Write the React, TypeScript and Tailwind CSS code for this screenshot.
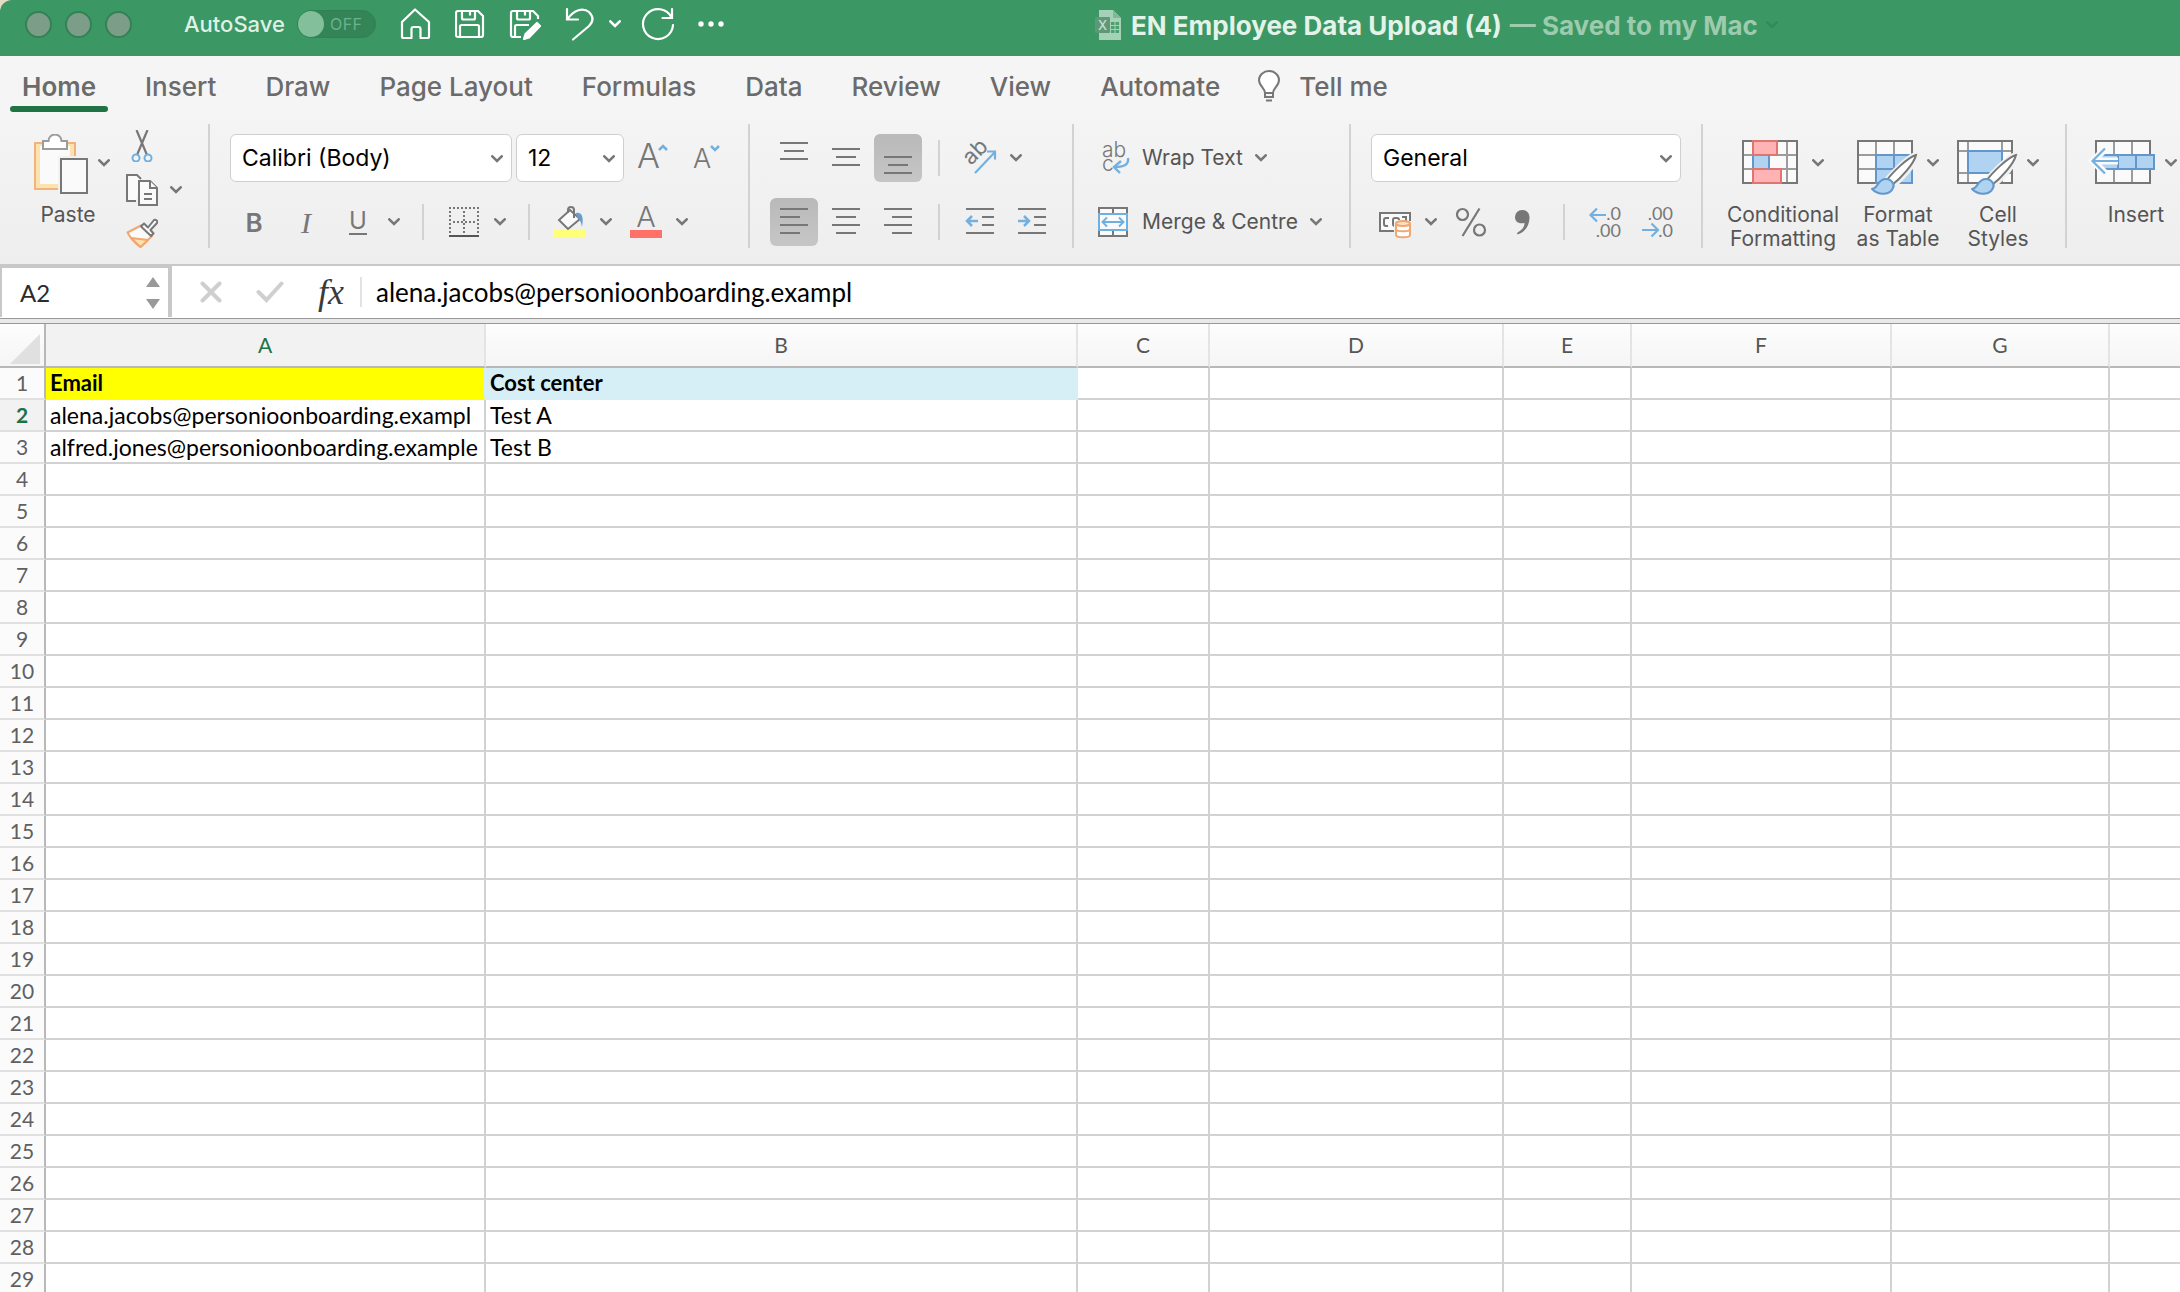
import { useState, type ReactNode } from "react";

const TABS = ["Home", "Insert", "Draw", "Page Layout", "Formulas", "Data", "Review", "View", "Automate"];

const COLUMNS = [
  { name: "A", width: "w-[440px]" },
  { name: "B", width: "w-[592px]" },
  { name: "C", width: "w-[132px]" },
  { name: "D", width: "w-[294px]" },
  { name: "E", width: "w-[128px]" },
  { name: "F", width: "w-[260px]" },
  { name: "G", width: "w-[218px]" },
  { name: "", width: "" },
];

const ROW_COUNT = 29;

const CELLS: Record<string, string> = {
  A1: "Email",
  B1: "Cost center",
  A2: "alena.jacobs@personioonboarding.exampl",
  B2: "Test A",
  A3: "alfred.jones@personioonboarding.example",
  B3: "Test B",
};

const CELL_STYLES: Record<string, string> = {
  A1: "bg-[#ffff00] border-b-[#ffff00] border-r-[#d6eff7] text-[22px] font-bold",
  B1: "bg-[#d6eff7] border-[#d6eff7] text-[22px] font-bold",
};

function Chevron({ className = "text-[#777777]" }: { className?: string }) {
  return (
    <svg width="12" height="8" viewBox="0 0 12 8" fill="none" className={className}>
      <path d="M1.3 1.3 6 6l4.7-4.7" stroke="currentColor" strokeWidth="2.6" strokeLinecap="round" />
    </svg>
  );
}

function ToolButton({ label, active = false, children }: { label: string; active?: boolean; children: ReactNode }) {
  return (
    <button
      aria-label={label}
      aria-pressed={active}
      className={`flex h-12 w-12 shrink-0 items-center justify-center rounded-md text-[#777777] ${
        active ? "bg-linear-to-b from-[#b9b9b9] to-[#c6c6c6]" : ""
      }`}
    >
      {children}
    </button>
  );
}

function MenuButton({ label }: { label: string }) {
  return (
    <button aria-label={label} className="flex h-12 w-6 shrink-0 items-center justify-center">
      <Chevron />
    </button>
  );
}

function Divider() {
  return <div className="mx-4 h-9 w-[2px] shrink-0 bg-[#d2d2d2]" />;
}

function GroupDivider() {
  return <div className="mt-1 h-[124px] w-[2px] shrink-0 bg-[#d2d2d2]" />;
}

function Dropdown({ label, options, width }: { label: string; options: string[]; width: string }) {
  return (
    <div className={`relative h-12 shrink-0 ${width}`}>
      <select
        aria-label={label}
        className="h-12 w-full appearance-none rounded-md border border-[#cfcfcf] bg-white pl-[11px] text-[23px] text-black"
      >
        {options.map((o) => (
          <option key={o}>{o}</option>
        ))}
      </select>
      <span className="pointer-events-none absolute top-[21px] right-[9px]">
        <Chevron />
      </span>
    </div>
  );
}

// horizontal strokes of the alignment icons: [x, y, width]
function Lines({ rows }: { rows: [number, number, number][] }) {
  return (
    <svg width="32" height="32" viewBox="0 0 32 32" fill="#777777">
      {rows.map(([x, y, w]) => (
        <rect key={y} x={x} y={y} width={w} height="2" />
      ))}
    </svg>
  );
}

function BigButton({ label, width = "w-[82px]", icon }: { label: ReactNode; width?: string; icon: ReactNode }) {
  return (
    <button className={`flex shrink-0 flex-col items-center text-[21px] leading-6 text-[#555555] ${width}`}>
      <span className="flex h-[69px] w-[82px] items-start gap-[14px] pt-[6px]">
        {icon}
        <span className="pt-[19px]">
          <Chevron />
        </span>
      </span>
      <span className="text-center whitespace-nowrap">{label}</span>
    </button>
  );
}

function Brush() {
  return (
    <g>
      <path d="M57 15C51 17 34 34 29 41l6 6C44 40 58 24 60 17z" fill="#f1f1f1" stroke="#f1f1f1" strokeWidth="5" />
      <path d="M59 15C51 17 35 33 30 40l5 5C43 39 57 24 59 15z" fill="#fff" stroke="#777" strokeWidth="2" />
      <path
        d="M15 49c7-1 5-10 14-10 6 0 9 6 7 9-3 7-14 8-21 1z"
        fill="#afd3f1"
        stroke="#6397cc"
        strokeWidth="2"
        strokeLinejoin="round"
      />
    </g>
  );
}

function TitleBar() {
  const [autoSave, setAutoSave] = useState(false);
  return (
    <header className="flex h-14 shrink-0 items-start rounded-tl-xl bg-[#3b9763] pl-[25px] text-white">
      <div className="flex h-12 items-center gap-[13px]">
        {["Close", "Minimise", "Zoom"].map((n) => (
          <button key={n} aria-label={n} className="h-[27px] w-[27px] rounded-full border-2 border-[#338255] bg-[#7c9e88]" />
        ))}
      </div>
      <label htmlFor="autosave" className="ml-[52px] flex h-12 w-[113px] items-center text-[22px] font-medium text-[#dff1e6]">
        AutoSave
      </label>
      <button
        id="autosave"
        role="switch"
        aria-checked={autoSave}
        onClick={() => setAutoSave(!autoSave)}
        className="mt-[10px] flex h-7 w-[79px] shrink-0 items-center gap-[6px] rounded-full border border-[#318155] bg-[#338457] text-base tracking-wide text-[#6fb18b]"
      >
        <span className="h-[26px] w-[26px] rounded-full bg-[#83bf9b]" />
        OFF
      </button>
      <div className="ml-6 flex h-12 items-center">
        <button aria-label="Home" className="w-[55px]">
          <svg width="32" height="32" viewBox="0 0 32 32" fill="none" stroke="#fff" strokeWidth="2.2" strokeLinejoin="round">
            <path d="M2 14 15 1.500 29 14v14.500a1.500 1.500 0 0 1-1.500 1.500H20.500V21a2 2 0 0 0-2-2h-5a2 2 0 0 0-2 2v9H3.500A1.500 1.500 0 0 1 2 28.500z" />
          </svg>
        </button>
        <button aria-label="Save" className="w-[54px]">
          <svg width="32" height="32" viewBox="0 0 32 32" fill="none" stroke="#fff" strokeWidth="2.2" strokeLinejoin="round">
            <path d="M3 3h20l5 5v19a2 2 0 0 1-2 2H3a2 2 0 0 1-2-2V5a2 2 0 0 1 2-2z" />
            <path d="M7 3v7a1.500 1.500 0 0 0 1.500 1.500h10A1.500 1.500 0 0 0 20 10V3M5 29V18.500A1.500 1.500 0 0 1 6.500 17h16a1.500 1.500 0 0 1 1.500 1.500V29M15 3.500v4" />
          </svg>
        </button>
        <button aria-label="Save as" className="w-[54px]">
          <svg width="32" height="32" viewBox="0 0 32 32" fill="none" stroke="#fff" strokeWidth="2.2" strokeLinejoin="round">
            <path d="M12 29H4a2 2 0 0 1-2-2V5a2 2 0 0 1 2-2h20l5 5v3" />
            <path d="M8 3v7a1.500 1.500 0 0 0 1.500 1.500h10A1.500 1.500 0 0 0 21 10V3M6 29V18.500A1.500 1.500 0 0 1 7.500 17H20M16 3.500v4" />
            <path d="M28 15l3 3L20 29.500l-5 1.500 1.500-5z" fill="#fff" />
          </svg>
        </button>
        <button aria-label="Undo" className="w-[46px]">
          <svg width="32" height="34" viewBox="0 0 32 34" fill="none" stroke="#fff" strokeWidth="2.2" strokeLinecap="round">
            <path d="M4 2v10.500h11M4.500 12C11 3 20 0 26 5c5 5 4 10 0 14L10 32.500" />
          </svg>
        </button>
        <button aria-label="Undo history" className="w-8">
          <Chevron className="text-white" />
        </button>
        <button aria-label="Redo" className="w-[56px]">
          <svg width="34" height="34" viewBox="0 0 34 34" fill="none" stroke="#fff" strokeWidth="2.2" strokeLinecap="round">
            <path d="M31 2v9h-9.500M30.500 10.500A15 15 0 1 0 32 18" />
          </svg>
        </button>
        <button aria-label="More" className="w-[28px]">
          <svg width="28" height="8" viewBox="0 0 28 8" fill="#fff">
            <circle cx="4" cy="4" r="2.7" />
            <circle cx="14" cy="4" r="2.7" />
            <circle cx="24" cy="4" r="2.7" />
          </svg>
        </button>
      </div>
      <div className="ml-[370px] flex h-[50px] items-center text-[26px] font-bold whitespace-nowrap">
        <svg width="28" height="30" viewBox="0 0 28 30" className="mr-[8px]">
          <path d="M4 0h14l8 8v22H4z" fill="#a5d1b6" />
          <path d="M18 0l8 8h-8z" fill="#7fb997" />
          <path d="M16 12h8v3h-8zM16 16h8v3h-8zM16 20h8v3h-8z" fill="#4f9f71" />
          <path d="M20 11v13" stroke="#a5d1b6" strokeWidth="1" />
          <rect y="7" width="15" height="16" rx="1" fill="#5f9876" />
          <text x="7.5" y="20" textAnchor="middle" fontSize="13" fontWeight="500" fill="#c3dfce">
            X
          </text>
        </svg>
        <h1 className="text-[#e3f3e9]">EN Employee Data Upload (4)</h1>
        <span className="ml-2 text-[#9ccbae]">— Saved to my Mac</span>
        <button aria-label="File menu" className="ml-[8px]">
          <Chevron className="text-[#338a5a]" />
        </button>
      </div>
    </header>
  );
}

function Tabs() {
  const [tab, setTab] = useState("Home");
  return (
    <nav className="flex h-16 shrink-0 items-start gap-[25px] bg-[#f5f5f5] pl-[10px] text-[26px] font-medium text-[#6b6b6b]">
      {TABS.map((t) => (
        <button key={t} onClick={() => setTab(t)} className={`flex h-14 flex-col ${t === tab ? "font-semibold" : ""}`}>
          <span className="flex h-[50px] items-center px-[12px] pt-[10px] whitespace-nowrap">{t}</span>
          {t === tab && <span className="h-[6px] w-full rounded-full bg-[#217346]" />}
        </button>
      ))}
      <button className="flex h-[50px] items-center gap-[18px] pt-[10px] whitespace-nowrap">
        <svg width="24" height="32" viewBox="0 0 24 32" fill="none" stroke="#777" strokeWidth="2">
          <path d="M8 23c0-5-6-7-6-13a10 9 0 0 1 20 0c0 6-6 8-6 13z" fill="#fff" />
          <path d="M8 23v4h8v-4M9 30.500h6" />
        </svg>
        Tell me
      </button>
    </nav>
  );
}

function ClipboardGroup() {
  return (
    <div className="flex w-[208px] shrink-0 pl-[34px]">
      <button className="flex w-[92px] flex-col text-[21px] leading-6 text-[#555555]">
        <span className="flex h-[73px]">
          <svg width="54" height="62" viewBox="0 0 54 62" fill="none" className="mt-1 mr-[10px]">
            <rect x="1" y="9" width="40" height="46" fill="#fbe3b0" stroke="#f2b27e" strokeWidth="2" />
            <rect x="6" y="12" width="30" height="38" fill="#fafafa" />
            <path d="M9 15V7h5.500a6.500 6.500 0 0 1 13 0H33v8z" fill="#fff" stroke="#9c9c9c" strokeWidth="2" />
            <rect x="24" y="22" width="30" height="40" fill="#f2f2f2" />
            <rect x="27" y="25" width="26" height="34" fill="#fafafa" stroke="#777" strokeWidth="2" />
          </svg>
          <span className="pt-[29px]">
            <Chevron />
          </span>
        </span>
        <span className="w-[68px] text-center">Paste</span>
      </button>
      <div className="flex flex-col gap-3">
        <button aria-label="Cut" className="h-8 w-8">
          <svg width="32" height="32" viewBox="0 0 32 32" fill="none">
            <path d="M10.500 0 21 25M21.500 0 11 25" stroke="#777" strokeWidth="2.2" />
            <circle cx="10" cy="28" r="3.5" stroke="#6fb0e0" strokeWidth="2" />
            <circle cx="22" cy="28" r="3.5" stroke="#6fb0e0" strokeWidth="2" />
          </svg>
        </button>
        <button aria-label="Copy" className="flex h-8 items-center gap-3">
          <svg width="32" height="32" viewBox="0 0 32 32" fill="#fafafa" stroke="#777" strokeWidth="2">
            <path d="M10 27H1V1h10l4 4" />
            <path d="M13 7h11l7 7v17H13z" />
            <path d="M24 7v7h7M18 20h8M18 25h8" />
          </svg>
          <Chevron />
        </button>
        <button aria-label="Format painter" className="h-8 w-8">
          <svg width="32" height="32" viewBox="0 0 32 32" fill="#fafafa" strokeWidth="2" strokeLinejoin="round">
            <path d="M16 7 1.500 14.500C5 21 10 26 14.500 29L26 18z" stroke="#f2a670" />
            <path d="M5 20 22 22l-7.500 7z" fill="#fbe3b0" stroke="#f2a670" />
            <path d="M15 8.500l3-3 4 4L28 2c2-1 4 1 3 3l-6.500 7 3 3.500-2.500 2.500z" stroke="#777" />
          </svg>
        </button>
      </div>
    </div>
  );
}

function FontGroup() {
  return (
    <div className="flex shrink-0 flex-col gap-4 px-5 pt-[14px]">
      <div className="flex gap-1">
        <Dropdown label="Font" options={["Calibri (Body)", "Arial", "Helvetica", "Times New Roman"]} width="w-[282px]" />
        <Dropdown label="Font size" options={["12", "10", "11", "14", "16", "18"]} width="w-[108px]" />
        <ToolButton label="Increase font size">
          <svg width="32" height="32" viewBox="0 0 32 32" fill="none" className="overflow-visible">
            <text x="1" y="26" fontSize="34" fontWeight="300" fill="#777">A</text>
            <path d="m23 8 4-4 4 4" stroke="#74b0df" strokeWidth="2.5" />
          </svg>
        </ToolButton>
        <ToolButton label="Decrease font size">
          <svg width="32" height="32" viewBox="0 0 32 32" fill="none" className="overflow-visible">
            <text x="5" y="26" fontSize="27" fontWeight="300" fill="#777">A</text>
            <path d="m23 4 4 4 4-4" stroke="#74b0df" strokeWidth="2.5" />
          </svg>
        </ToolButton>
      </div>
      <div className="flex items-center">
        <div className="flex gap-1">
          <ToolButton label="Bold">
            <span className="text-[26px] font-semibold">B</span>
          </ToolButton>
          <ToolButton label="Italic">
            <span className="font-['Liberation_Serif'] text-[30px] italic">I</span>
          </ToolButton>
          <ToolButton label="Underline">
            <span className="border-b-2 border-[#777777] text-[24px] leading-6">U</span>
          </ToolButton>
        </div>
        <MenuButton label="Underline styles" />
        <Divider />
        <ToolButton label="Borders">
          <svg width="30" height="30" viewBox="0 0 30 30" fill="#fafafa" stroke="#777" strokeWidth="2">
            <path d="M0 1h30M1 4v24M29 4v24M15 4v24M4 15h24" strokeDasharray="2 2" />
            <path d="M0 29h30" stroke="#555" />
          </svg>
        </ToolButton>
        <MenuButton label="Border styles" />
        <Divider />
        <ToolButton label="Fill colour">
          <svg width="32" height="32" viewBox="0 0 32 32" fill="none">
            <path d="M5 14 16 4l10 9-12 10z" fill="#fafafa" stroke="#777" strokeWidth="2" />
            <path d="M14 7V4a3 3 0 0 1 6 0v8" stroke="#777" strokeWidth="2" />
            <path d="M22 7c6-1 8 4 6 14-1-5-2-8-5-10z" fill="#6a9bd0" />
            <rect y="24" width="32" height="8" fill="#ffff7a" />
          </svg>
        </ToolButton>
        <MenuButton label="More fill colours" />
        <div className="w-1" />
        <ToolButton label="Font colour">
          <svg width="32" height="32" viewBox="0 0 32 32" className="overflow-visible">
            <text x="16" y="21" textAnchor="middle" fontSize="29" fontWeight="300" fill="#777">A</text>
            <rect y="24" width="32" height="8" fill="#ff7168" />
          </svg>
        </ToolButton>
        <MenuButton label="More font colours" />
      </div>
    </div>
  );
}

function AlignmentGroup() {
  return (
    <div className="flex shrink-0 flex-col gap-4 pt-[14px] pr-4 pl-5">
      <div className="flex items-center">
        <div className="flex gap-1">
          <ToolButton label="Top align">
            <Lines rows={[[2, 0, 28], [6, 8, 20], [2, 16, 28]]} />
          </ToolButton>
          <ToolButton label="Middle align">
            <Lines rows={[[2, 6, 28], [6, 14, 20], [2, 22, 28]]} />
          </ToolButton>
          <ToolButton label="Bottom align" active>
            <Lines rows={[[2, 14, 28], [6, 22, 20], [2, 30, 28]]} />
          </ToolButton>
        </div>
        <Divider />
        <ToolButton label="Orientation">
          <svg width="32" height="32" viewBox="0 0 32 32" fill="none" className="overflow-visible">
            <text x="7" y="24" fontSize="22" fill="#777" transform="rotate(-45 7 24)">ab</text>
            <path d="M11 31 31 10M23 9.500h8v8" stroke="#74b0df" strokeWidth="2.2" />
          </svg>
        </ToolButton>
        <MenuButton label="Orientation options" />
      </div>
      <div className="flex items-center">
        <div className="flex gap-1">
          <ToolButton label="Align left" active>
            <Lines rows={[[2, 2, 28], [2, 10, 20], [2, 18, 28], [2, 26, 20]]} />
          </ToolButton>
          <ToolButton label="Centre">
            <Lines rows={[[2, 2, 28], [6, 10, 20], [2, 18, 28], [6, 26, 20]]} />
          </ToolButton>
          <ToolButton label="Align right">
            <Lines rows={[[2, 2, 28], [10, 10, 20], [2, 18, 28], [10, 26, 20]]} />
          </ToolButton>
        </div>
        <Divider />
        <div className="flex gap-1">
          <ToolButton label="Decrease indent">
            <svg width="32" height="32" viewBox="0 0 32 32" fill="none" stroke="#777" strokeWidth="2">
              <path d="M2 3h28M18 11h12M18 19h12M2 27h28" />
              <path d="M14 15H4M8 10l-5 5 5 5" stroke="#74b0df" strokeWidth="2.5" />
            </svg>
          </ToolButton>
          <ToolButton label="Increase indent">
            <svg width="32" height="32" viewBox="0 0 32 32" fill="none" stroke="#777" strokeWidth="2">
              <path d="M2 3h28M18 11h12M18 19h12M2 27h28" />
              <path d="M2 15h10M8 10l5 5-5 5" stroke="#74b0df" strokeWidth="2.5" />
            </svg>
          </ToolButton>
        </div>
      </div>
    </div>
  );
}

function WrapGroup() {
  return (
    <div className="flex w-[275px] shrink-0 flex-col gap-4 pt-[14px] pl-6 text-[21px] text-[#555555]">
      <button className="flex h-12 items-center whitespace-nowrap">
        <svg width="32" height="32" viewBox="0 0 32 32" fill="none" className="mr-3 overflow-visible">
          <text x="4" y="15" fontSize="21" fontWeight="300" fill="#777">ab</text>
          <text x="4" y="29" fontSize="21" fontWeight="300" fill="#777">c</text>
          <path d="M30 16c1 6-3 9-13 9M23 19l-7 6 6 6" stroke="#74b0df" strokeWidth="2.4" />
        </svg>
        <span className="mr-3">Wrap Text</span>
        <Chevron />
      </button>
      <button className="flex h-12 items-center whitespace-nowrap">
        <svg width="32" height="32" viewBox="0 0 32 32" fill="#fafafa" strokeWidth="2" className="mr-3">
          <path d="M1 2h28v28H1zM15 2v28" stroke="#777" />
          <path d="M1 8h28v16H1z" stroke="#6fb0e0" />
          <path d="M5 16h20M9 11.500 4.500 16 9 20.500M21 11.500l4.500 4.500-4.500 4.500" fill="none" stroke="#6fb0e0" />
        </svg>
        <span className="mr-3">Merge &amp; Centre</span>
        <Chevron />
      </button>
    </div>
  );
}

function NumberGroup() {
  return (
    <div className="flex shrink-0 flex-col gap-4 px-5 pt-[14px]">
      <Dropdown label="Number format" options={["General", "Number", "Currency", "Date", "Text"]} width="w-[310px]" />
      <div className="flex items-center">
        <ToolButton label="Accounting format">
          <svg width="32" height="32" viewBox="0 0 32 32" fill="none" className="overflow-visible">
            <rect x="1" y="7" width="30" height="18" fill="#fafafa" stroke="#777" strokeWidth="2" />
            <path d="M10 12H7q-2 0-2 2v4q0 2 2 2h2M20 20h-4q-2 0-2-2v-4q0-2 2-2h2q2 0 2 2M23 11h4v5" stroke="#777" strokeWidth="2" />
            <path d="M15 15h17v17H15z" fill="#f1f1f1" />
            <path d="M17 17v12c0 3 14 3 14 0V17" fill="#fff" stroke="#f2a670" strokeWidth="2" />
            <path d="M17 23c0 3 14 3 14 0" stroke="#f2a670" strokeWidth="2" />
            <ellipse cx="24" cy="17.5" rx="7" ry="2.5" fill="#fde3c8" stroke="#f2a670" strokeWidth="2" />
          </svg>
        </ToolButton>
        <MenuButton label="Accounting options" />
        <div className="w-1" />
        <ToolButton label="Per cent style">
          <svg width="32" height="32" viewBox="0 0 32 32" fill="none" stroke="#777" strokeWidth="2.2">
            <circle cx="7.500" cy="8.500" r="5.5" />
            <circle cx="24.500" cy="24" r="5.5" />
            <path d="M24.500 2.500 7.500 30" />
          </svg>
        </ToolButton>
        <div className="w-1" />
        <ToolButton label="Comma style">
          <svg width="16" height="28" viewBox="0 0 16 28" fill="#777">
            <path d="M7 2a7 7 0 0 1 7.500 7.500C14.500 18 10 24 2.500 26.500L2 25c5-3 7.500-6 7.500-10C3 16.500 0 13 0 9a7 7 0 0 1 7-7z" />
          </svg>
        </ToolButton>
        <Divider />
        <div className="flex gap-1">
          <ToolButton label="Increase decimal">
            <svg width="34" height="32" viewBox="0 0 34 32" fill="none" className="overflow-visible">
              <text x="33" y="14" textAnchor="end" fontSize="18" fontFamily="Lato" fill="#777">.0</text>
              <text x="33" y="31" textAnchor="end" fontSize="18" fontFamily="Lato" fill="#777">.00</text>
              <path d="M18 9H3M9 2.500 2.500 9 9 15.500" stroke="#74b0df" strokeWidth="2.2" />
            </svg>
          </ToolButton>
          <ToolButton label="Decrease decimal">
            <svg width="34" height="32" viewBox="0 0 34 32" fill="none" className="overflow-visible">
              <text x="33" y="14" textAnchor="end" fontSize="18" fontFamily="Lato" fill="#777">.00</text>
              <text x="33" y="31" textAnchor="end" fontSize="18" fontFamily="Lato" fill="#777">.0</text>
              <path d="M2 24h15M11.500 17.500 18 24l-6.500 6.500" stroke="#74b0df" strokeWidth="2.2" />
            </svg>
          </ToolButton>
        </div>
      </div>
    </div>
  );
}

function StylesGroup() {
  return (
    <div className="flex shrink-0 items-start gap-[18px] pt-[14px] pr-[26px] pl-6">
      <BigButton
        width="w-[112px]"
        label={<>Conditional<br />Formatting</>}
        icon={
          <svg width="56" height="44" viewBox="0 0 56 44" fill="none" strokeWidth="2">
            <path d="M1 1h54v42H1z" fill="#fafafa" stroke="#777" />
            <path d="M11 2v40M45 2v40M2 15h52M2 29h52" stroke="#9c9c9c" />
            <path d="M12 16h32v12H12z" fill="#fafafa" />
            <path d="M11 1h24v14H11zM11 29h28v14H11z" fill="#ffb3b5" stroke="#e0756f" />
            <path d="M11 16h16v12H11z" fill="#afd3f1" />
            <path d="M27 15v14M11 16v12" stroke="#6397cc" />
          </svg>
        }
      />
      <BigButton
        label={<>Format<br />as Table</>}
        icon={
          <svg width="56" height="54" viewBox="0 0 56 54" fill="none" strokeWidth="2" className="overflow-visible">
            <path d="M1 1h54v42H1z" fill="#fafafa" stroke="#777" />
            <path d="M19 15h36v28H19z" fill="#afd3f1" />
            <path d="M19 2v13M37 2v13M2 15h17M2 29h17" stroke="#9c9c9c" />
            <path d="M19 15h36v28H19zM37 15v28M19 29h36" stroke="#6397cc" />
            <Brush />
          </svg>
        }
      />
      <BigButton
        label={<>Cell<br />Styles</>}
        icon={
          <svg width="56" height="54" viewBox="0 0 56 54" fill="none" strokeWidth="2" className="overflow-visible">
            <path d="M1 1h54v42H1z" fill="#fafafa" stroke="#777" />
            <path d="M11 2v40M45 2v40M2 11h52M2 33h52" stroke="#9c9c9c" />
            <path d="M11 11h34v22H11z" fill="#afd3f1" stroke="#6397cc" />
            <Brush />
          </svg>
        }
      />
    </div>
  );
}

function Ribbon() {
  return (
    <div className="flex h-36 shrink-0 overflow-hidden bg-linear-to-b from-[#f4f4f4] to-[#eeeeee]">
      <div className="flex items-start">
        <div className="pt-[10px]">
          <ClipboardGroup />
        </div>
        <GroupDivider />
        <FontGroup />
        <GroupDivider />
        <AlignmentGroup />
        <GroupDivider />
        <WrapGroup />
        <GroupDivider />
        <NumberGroup />
        <GroupDivider />
        <StylesGroup />
        <GroupDivider />
        <div className="shrink-0 pt-[14px] pl-7">
          <BigButton
            label="Insert"
            icon={
              <svg width="56" height="44" viewBox="0 0 56 44" fill="none" strokeWidth="2" className="overflow-visible">
                <path d="M1 1h54v42H1z" fill="#fafafa" stroke="#777" />
                <path d="M19 2v40M37 2v40" stroke="#9c9c9c" />
                <path d="M5 15h54v14H5z" fill="#afd3f1" stroke="#6397cc" />
                <path d="M23 15v14M41 15v14" stroke="#6397cc" />
                <path d="M23 21H-3M11 8l-13 13 13 13" stroke="#fafafa" strokeWidth="7" />
                <path d="M23 21H-3M10 8.500-2.500 21 10 33.500" stroke="#74b0df" strokeWidth="2.2" />
              </svg>
            }
          />
        </div>
      </div>
    </div>
  );
}

function FormulaBar() {
  return (
    <div className="flex h-[54px] shrink-0 border-t-2 border-[#c8c8c8] bg-white font-['Lato',sans-serif]">
      <div className="flex h-[51px] w-[172px] shrink-0 items-center border-t-2 border-r-4 border-l-2 border-[#c8c8c8]">
        <input aria-label="Name box" defaultValue="A2" className="w-[144px] pl-[18px] text-[24px] text-[#2b2b2b] outline-none" />
        <div className="flex flex-col gap-3">
          <button aria-label="Previous name">
            <svg width="14" height="10" viewBox="0 0 14 10" className="fill-[#999999]">
              <path d="M7 0l7 10H0z" />
            </svg>
          </button>
          <button aria-label="Next name">
            <svg width="14" height="10" viewBox="0 0 14 10" className="fill-[#999999]">
              <path d="M0 0h14L7 10z" />
            </svg>
          </button>
        </div>
      </div>
      <div className="flex h-[52px] grow items-center pl-7">
        <button aria-label="Cancel" className="w-14">
          <svg width="22" height="22" viewBox="0 0 22 22" stroke="#cfcfcf" strokeWidth="4" strokeLinecap="round">
            <path d="m2.500 2.500 17 17M19.500 2.500l-17 17" />
          </svg>
        </button>
        <button aria-label="Enter" className="w-[62px]">
          <svg width="28" height="22" viewBox="0 0 28 22" fill="none" stroke="#cfcfcf" strokeWidth="4" strokeLinecap="round">
            <path d="m2.500 11 8 8L25.500 2.500" />
          </svg>
        </button>
        <button aria-label="Insert function" className="w-[42px] text-left font-['Liberation_Serif',serif] text-[36px] leading-8 text-[#3a3a3a] italic">
          fx
        </button>
        <div className="h-[30px] w-[2px] bg-[#e2e2e2]" />
        <input
          aria-label="Formula"
          defaultValue={CELLS.A2}
          className="h-full grow pl-[14px] text-[26px] text-black outline-none"
        />
      </div>
    </div>
  );
}

function Sheet() {
  const rows = Array.from({ length: ROW_COUNT }, (_, i) => i + 1);
  return (
    <table className="w-full table-fixed border-separate border-spacing-0 bg-white font-['Lato',sans-serif] text-[21px]">
      <thead>
        <tr className="h-11 bg-linear-to-b from-[#fdfdfd] to-[#f5f5f5]">
          <th className="w-[46px] border-r-2 border-b-2 border-[#b8b8b8] p-0">
            <svg width="30" height="30" viewBox="0 0 30 30" className="mt-2 ml-[10px] fill-[#e0e0e0]">
              <path d="M30 0v30H0z" />
            </svg>
          </th>
          {COLUMNS.map(({ name, width }) => (
            <th
              key={name}
              scope="col"
              className={`border-r-2 border-b-2 border-r-[#e4e4e4] border-b-[#b8b8b8] p-0 font-normal last:border-r-0 ${width} ${
                name === "A" ? "bg-[#f2f2f2] text-[#1e7145]" : "text-[#555555]"
              }`}
            >
              {name}
            </th>
          ))}
        </tr>
      </thead>
      <tbody>
        {rows.map((row) => (
          <tr key={row} className="h-8">
            <th
              scope="row"
              className={`border-r-2 border-b-2 border-r-[#b8b8b8] border-b-[#e0e0e0] p-0 leading-[30px] ${
                row === 2 ? "bg-[#f2f2f2] font-bold text-[#1e7145]" : "bg-[#fbfbfb] font-normal text-[#606060]"
              }`}
            >
              {row}
            </th>
            {COLUMNS.map(({ name }) => (
              <td
                key={name}
                className={`border-r-2 border-b-2 p-0 pl-1 leading-[30px] whitespace-nowrap text-black last:border-r-0 ${
                  CELL_STYLES[name + row] ?? "border-[#d2d2d2] text-[23px]"
                }`}
              >
                {CELLS[name + row]}
              </td>
            ))}
          </tr>
        ))}
      </tbody>
    </table>
  );
}

export default function App() {
  return (
    <div className="flex h-screen flex-col overflow-hidden bg-[#e6dcc4] font-['Inter',sans-serif]">
      <TitleBar />
      <Tabs />
      <Ribbon />
      <FormulaBar />
      <div className="h-[6px] shrink-0 border-y border-[#999999] bg-[#e9e9e9]" />
      <main className="grow bg-white">
        <Sheet />
      </main>
    </div>
  );
}
